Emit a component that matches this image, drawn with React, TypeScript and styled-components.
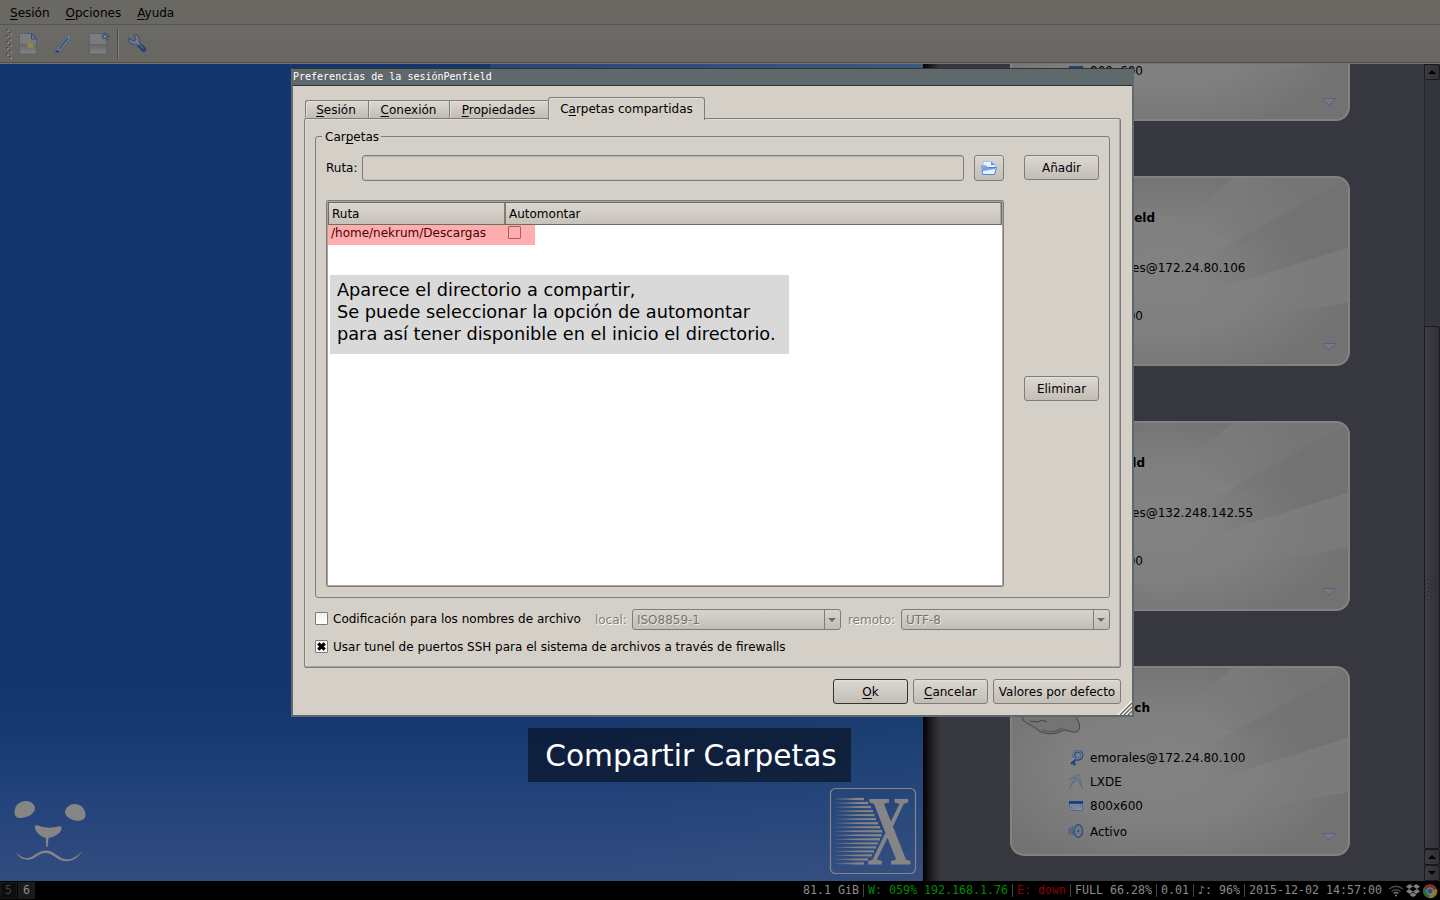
import React from "react";
import styled, { createGlobalStyle, css } from "styled-components";

const GlobalStyle = createGlobalStyle`
  * { box-sizing: border-box; }
  body { margin: 0; background: #000; }
`;

const Screen = styled.div`
  position: relative;
  display: flex;
  flex-direction: column;
  width: 1440px;
  height: 900px;
  overflow: hidden;
  font: 12px/16px "DejaVu Sans", sans-serif;
  color: #000;
  white-space: nowrap;
`;

/* ---------- main window ---------- */

const MenuBar = styled.div`
  display: flex;
  flex: none;
  gap: 16px;
  height: 25px;
  padding: 5px 10px 0;
  background: #6a6863;
  border-bottom: 1px solid #55534f;
`;

const Mnemonic = styled.span`
  text-decoration: underline;
  text-decoration-thickness: 1px;
  text-underline-offset: 2px;
  text-decoration-skip-ink: none;
`;

const ToolBar = styled.div`
  display: flex;
  flex: none;
  align-items: center;
  height: 39px;
  padding-left: 6px;
  background: linear-gradient(#6c6a66, #686661);
  border-bottom: 1px solid #75736f;
  box-shadow: inset 0 -1px 0 #514f4b;
`;

const ToolIcon = styled.svg<{ $gap: number }>`
  flex: none;
  width: 22px;
  height: 24px;
  margin-left: ${(p) => p.$gap}px;
`;

const ToolSeparator = styled.div`
  width: 2px;
  height: 30px;
  margin-left: 7px;
  background: #4b4945;
  border-right: 1px solid #84827d;
`;

const Workspace = styled.div`
  display: flex;
  flex: none;
  height: 817px;
`;

const Wallpaper = styled.div`
  display: flex;
  align-items: flex-end;
  justify-content: space-between;
  width: 923px;
  height: 817px;
  padding: 0 6px 6px 12px;
  background: linear-gradient(90deg, #28447a, #3a5a80) right top / 433px 20px no-repeat,
    linear-gradient(75deg, rgba(90, 130, 140, 0) 55%, rgba(90, 120, 130, 0.12) 100%),
    linear-gradient(#13366c 0, #13366c 76%, #173a70 82%, #23437a 90%, #334c80 100%);
`;

const SessionPanel = styled.div`
  display: flex;
  flex-direction: column;
  gap: 55px;
  width: 501px;
  height: 817px;
  padding-left: 87px;
  overflow: hidden;
  background: linear-gradient(90deg, #000 0, #1a1a1d 7px, #373740 17px);
`;

const Card = styled.div`
  position: relative;
  flex: none;
  display: flex;
  flex-direction: column;
  width: 340px;
  height: 190px;
  border: 2px solid #828282;
  border-radius: 14px;
  overflow: hidden;
  background: radial-gradient(ellipse 190px 110px at 150px 100px, #828282 0, #808080 50%, #727272 100%);
  &:first-child { margin-top: -133px; }
`;

const Sheen = styled.svg`
  position: absolute;
  inset: 0;
  width: 336px;
  height: 186px;
`;

const CardHead = styled.div`
  position: relative;
  display: flex;
  height: 78px;
  padding: 8px 0 0 8px;
`;

const CardName = styled.div<{ $end: number }>`
  width: ${(p) => p.$end - 1084}px;
  padding-top: 24px;
  direction: rtl;
  font-weight: bold;
`;

const CardRow = styled.div<{ $last?: boolean }>`
  position: relative;
  display: flex;
  align-items: center;
  gap: 6px;
  height: 24px;
  padding: 0 11px 0 56px;
  margin-top: ${(p) => (p.$last ? 2 : 0)}px;
  svg { flex: none; }
`;

const Expander = styled.svg`
  width: 16px;
  height: 10px;
  margin: 10px 0 0 auto;
`;

const ScrollBar = styled.div`
  display: flex;
  flex-direction: column;
  width: 16px;
  background: #34343b;
  border-left: 1px dotted #1e1e22;
`;

const ScrollButton = styled.div`
  display: flex;
  align-items: center;
  justify-content: center;
  flex: none;
  height: 16px;
  margin-left: -1px;
  border: 1px solid #1a1a1d;
  border-radius: 2px;
  background: linear-gradient(90deg, #3b3b44, #2f2f35);
`;

const ScrollHandle = styled.div`
  display: flex;
  align-items: center;
  justify-content: center;
  height: 523px;
  margin: 246px 0 0 -1px;
  border: 1px solid #1a1a1d;
  border-radius: 2px;
  background: linear-gradient(90deg, #3c3c46, #303036);
`;

/* ---------- status bar ---------- */

const StatusBar = styled.div`
  display: flex;
  flex: none;
  align-items: center;
  height: 19px;
  background: #000;
  color: #8b8b8b;
  font: 11.63px/16px "DejaVu Sans Mono", monospace;
`;

const Desk = styled.div<{ $active?: boolean }>`
  width: 17px;
  height: 17px;
  margin-right: 1px;
  line-height: 15px;
  text-align: center;
  border: 1px solid ${(p) => (p.$active ? "#1d1d1d" : "#191919")};
  background: ${(p) => (p.$active ? "#1a1a1a" : "#0e0e0e")};
  color: ${(p) => (p.$active ? "#8b8b8b" : "#444")};
`;

const StatusItems = styled.div`
  display: flex;
  align-items: center;
  margin-left: auto;
`;

const StatusItem = styled.div<{ $chars: number; $color?: string; $last?: boolean }>`
  width: ${(p) => p.$chars * 7 + (p.$last ? 6 : 5)}px;
  margin-right: ${(p) => (p.$last ? 0 : 4)}px;
  height: 13px;
  line-height: 13px;
  color: ${(p) => p.$color || "#8b8b8b"};
  border-right: ${(p) => (p.$last ? "none" : "1px solid #444")};
`;

const Tray = styled.div`
  display: flex;
  gap: 1px;
  width: 52px;
  padding-right: 2px;
`;

/* ---------- dialog ---------- */

const Dialog = styled.div`
  position: absolute;
  left: 291px;
  top: 68px;
  display: flex;
  flex-direction: column;
  width: 843px;
  height: 649px;
  border: 2px solid #5f686b;
  border-top: 1px solid #333;
  background: #d4cfc7;
`;

const TitleBar = styled.div`
  flex: none;
  height: 17px;
  background: #5f686b;
  border-bottom: 1px solid #2c2f30;
  color: #fff;
  font: 10px/16px "DejaVu Sans Mono", monospace;
`;

const Tabs = styled.div`
  position: relative;
  display: flex;
  align-items: flex-end;
  flex: none;
  height: 33px;
  margin: 0 0 -1px 12px;
`;

const Tab = styled.div<{ $w: number; $active?: boolean }>`
  width: ${(p) => p.$w}px;
  height: 19px;
  padding-right: 1px;
  text-align: center;
  line-height: 19px;
  border: 1px solid #807d78;
  border-right-width: 0;
  background: linear-gradient(#dcd8d1, #c1bcb4);
  box-shadow: inset 1px 1px 0 #e2dfd9;
  &:first-child {
    border-top-left-radius: 3px;
    padding-right: 2px;
  }
  ${(p) =>
    p.$active &&
    css`
      height: 23px;
      line-height: 22px;
      border-right-width: 1px;
      border-bottom: 0;
      border-radius: 3px 3px 0 0;
      background: #d4cfc7;
      margin-bottom: -1px;
      padding: 0 0 1px;
    `}
`;

const Pane = styled.div`
  display: flex;
  flex-direction: column;
  flex: none;
  width: 817px;
  height: 550px;
  margin-left: 11px;
  padding: 9px 10px 0;
  border: 1px solid #807d78;
  border-radius: 2px;
  box-shadow: inset -1px -1px 0 #aaa69f, inset 1px 1px 0 #dedbd5;
`;

const Group = styled.fieldset`
  display: flex;
  flex: none;
  width: 795px;
  height: 470px;
  margin: 0;
  padding: 10px 10px 10px;
  border: 1px solid #807d78;
  border-radius: 3px;
  min-width: 0;
`;

const Legend = styled.legend`
  margin-left: -4px;
  padding: 0 2px 0 3px;
  height: 17px;
  line-height: 19px;
`;

const Main = styled.div`
  width: 678px;
  margin-right: 20px;
`;

const PathRow = styled.div`
  display: flex;
  align-items: center;
  height: 26px;
`;

const PathInput = styled.div`
  width: 602px;
  height: 26px;
  margin: 0 10px 0 auto;
  border: 1px solid #807d78;
  border-radius: 3px;
  box-shadow: inset 0 1px 0 #bab6af, inset 0 -1px 0 #c4c0b9;
`;

const Button = styled.div<{ $w: number; $h?: number; $primary?: boolean }>`
  display: flex;
  flex: none;
  align-items: center;
  justify-content: center;
  width: ${(p) => p.$w}px;
  height: ${(p) => p.$h || 25}px;
  border: 1px solid ${(p) => (p.$primary ? "#35332f" : "#807d78")};
  border-radius: 3px;
  background: linear-gradient(#dcd8d1, #c2bdb5);
  box-shadow: inset 0 1px 0 #e3e0da;
`;

const Side = styled.div`
  display: flex;
  flex-direction: column;
  gap: 196px;
`;

const Table = styled.div`
  position: relative;
  height: 387px;
  margin-top: 19px;
  padding: 1px;
  border: 1px solid #807d78;
  border-radius: 2px;
  background: #fff;
  box-shadow: inset 0 0 0 1px #aaa69f;
`;

const TableHead = styled.div`
  display: flex;
  height: 23px;
  border: 1px solid #6f6c67;
  background: linear-gradient(#dcd8d1, #c6c1b9);
`;

const HeadCell = styled.div<{ $w?: number }>`
  width: ${(p) => (p.$w ? p.$w + "px" : "auto")};
  flex: ${(p) => (p.$w ? "none" : "1")};
  padding: 3px 0 0 3px;
  border-right: ${(p) => (p.$w ? "2px solid #807d78" : "1px solid #aaa69f")};
`;

const SelectedRow = styled.div`
  display: flex;
  width: 207px;
  height: 20px;
  padding: 0 0 0 3px;
  background: #ffadad;
  color: #4a0008;
`;

const RowCheck = styled.div`
  width: 13px;
  height: 13px;
  margin: 1px 14px 0 auto;
  border: 1px solid #a05f60;
  border-radius: 1px;
`;

const Note = styled.div`
  position: absolute;
  left: 3px;
  top: 74px;
  width: 459px;
  height: 79px;
  padding: 4px 7px;
  background: #d9d9d9;
  font-size: 17.73px;
  line-height: 22px;
`;

const OptionRow = styled.div<{ $top: number }>`
  display: flex;
  align-items: center;
  flex: none;
  height: 21px;
  margin-top: ${(p) => p.$top}px;
`;

const CheckBox = styled.div`
  display: flex;
  width: 13px;
  height: 13px;
  margin: -2px 5px 0 0;
  border: 1px solid #807d78;
  border-radius: 1px;
  background: linear-gradient(#f1f1f1, #fff);
`;

const OptionLabel = styled.div`
  margin-top: -2px;
`;

const Dim = styled.div<{ $gap: number; $w: number }>`
  width: ${(p) => p.$w}px;
  margin-left: ${(p) => p.$gap}px;
  color: #807d78;
  text-shadow: 1px 1px 0 #fff;
`;

const Combo = styled.div`
  display: flex;
  width: 209px;
  height: 21px;
  padding-left: 4px;
  line-height: 20px;
  border: 1px solid #807d78;
  border-radius: 3px;
  color: #76736e;
  text-shadow: 1px 1px 0 #e9e7e2;
  background: linear-gradient(#d8d4cd, #c2bdb5);
`;

const ComboArrow = styled.div`
  display: flex;
  align-items: center;
  justify-content: center;
  width: 16px;
  height: 19px;
  margin-left: auto;
  border-left: 1px solid #807d78;
`;

const Footer = styled.div`
  display: flex;
  gap: 5px;
  justify-content: flex-end;
  padding: 11px 11px 0 0;
`;

const Grip = styled.svg`
  position: absolute;
  right: 0;
  bottom: 0;
  width: 14px;
  height: 14px;
`;

const Caption = styled.div`
  position: absolute;
  left: 528px;
  top: 728px;
  width: 323px;
  height: 54px;
  padding-left: 3px;
  text-align: center;
  background: rgba(10, 20, 38, 0.7);
  color: #fff;
  font-size: 29.63px;
  line-height: 55px;
`;

const FaceArt = styled.svg`
  width: 76px;
  height: 66px;
  margin-bottom: 11px;
`;

const LogoArt = styled.svg`
  width: 87px;
  height: 87px;
  overflow: visible;
`;

function Face() {
  return (
    <FaceArt viewBox="12 798 76 66" fill="#858585">
      <path d="M14.500 812C14.500 806 19 801 25.500 801C31 801 35 804.500 35 809C34 814 27 818 20.500 818C16.500 818 14.500 816 14.500 812Z" />
      <path d="M65 812C65.500 807 70 804 75 804C81 804 86 809 85.500 816C85 820 80 821.500 75 820.500C70 819.500 65 816 65 812Z" />
      <path d="M35 826C36 824.500 38 825.500 41 826.500C46 828 53 828 58 826.500C60 826 62 826.500 61.500 829C60 834 54 837 48.500 838L47.700 847H46.300L45.800 838C40 836.500 34 831 35 826Z" />
      <path d="M16 852C21 858 27 859.500 32 856.500C37 853.500 41 850 47 850.500C54 851 58 857.500 64 859C71 860.500 77 857 82 851C78 859 71 862 64 861C57 860 53 853.500 46 853C40 852.500 37 857 32 859C26 861 19 859 16 852Z" />
    </FaceArt>
  );
}

function XLogo() {
  const ends = [864, 868, 871, 873, 874.5, 876, 878, 880, 882, 881.5, 880, 878, 876, 874, 872, 868, 864];
  return (
    <LogoArt viewBox="830 788 87 87">
      <defs>
        <linearGradient id="fade" gradientUnits="userSpaceOnUse" x1="835" x2="856" y1="0" y2="0">
          <stop offset="0" stopColor="#858585" stopOpacity="0.3" />
          <stop offset="1" stopColor="#858585" />
        </linearGradient>
      </defs>
      <rect x="830.500" y="788.500" width="85" height="85" rx="5" fill="none" stroke="#858585" strokeWidth="1.200" />
      {ends.map((e, i) => {
        const y = 799 + i * 4.03;
        return <path key={i} d={`M836 ${y - 0.4}L${e} ${y - 1.2}v2.400L836 ${y + 0.4}z`} fill="url(#fade)" />;
      })}
      <text transform="translate(867 864) scale(.62 1)" fontFamily="Liberation Serif, serif" fontWeight="bold" fontSize="99" fill="#858585">X</text>
    </LogoArt>
  );
}

const Triangle = ({ up, color = "#000" }: { up?: boolean; color?: string }) => (
  <svg width="8" height="4" viewBox="0 0 8 4">
    <path d={up ? "M0 4L4 0L8 4Z" : "M0 0H8L4 4Z"} fill={color} />
  </svg>
);

const KeyIcon = () => (
  <svg width="16" height="16" viewBox="0 0 16 16" fill="none">
    <path d="M8.500 8.500L2.500 13.500M4.500 11.500L7 15" stroke="#23457b" strokeWidth="3" />
    <circle cx="10" cy="5.300" r="4" stroke="#2d4e82" strokeWidth="3" />
    <circle cx="9.600" cy="4.900" r="4" stroke="#7889a3" strokeWidth="1.100" />
    <path d="M7 8L1 13" stroke="#8090a8" strokeWidth="1.300" />
  </svg>
);

const LxdeIcon = () => (
  <svg width="16" height="16" viewBox="0 0 16 16" fill="none" stroke="#5b6c87" strokeWidth="0.900">
    <path d="M.5 5.500L5 3.500L11.500 .5L12 5L14.500 15L10 5.500L6 8L1.500 15L4.500 7.500L9 3.500L.5 5.500Z" fill="#767c86" />
  </svg>
);

const ScreenIcon = () => (
  <svg width="16" height="16" viewBox="0 0 16 16">
    <rect x="1.500" y="3.500" width="13" height="9" rx="1" fill="#7f8da2" stroke="#506a92" />
    <path d="M1 3h14v3H1z" fill="#1f4279" />
    <path d="M3 7.500h10v2H7v1H3z" fill="#5c7091" />
    <path d="M4 9h5M10 8.500h2" stroke="#939ba6" />
  </svg>
);

const SoundIcon = () => (
  <svg width="16" height="16" viewBox="0 0 16 16" fill="none" stroke="#2c4e80">
    <ellipse cx="10.300" cy="7" rx="4.200" ry="6.300" strokeWidth="1.400" />
    <ellipse cx="10.300" cy="7" rx="2.300" ry="4" stroke="#627692" strokeWidth=".8" />
    <path d="M1.500 4v6.500M4.200 2.500v9" strokeWidth="1.700" stroke="#42608a" />
    <path d="M8.800 7h3M10.300 5.500v3" strokeWidth="1" />
  </svg>
);

function Seal() {
  return (
    <svg width="64" height="64" viewBox="0 0 64 64" fill="#747474" stroke="#424242" strokeWidth="1">
      <path d="M2 38C2 25 20 14 36 17C52 19 56 34 57 43C61 48 60 56 56 56C51 57 48 54 44 54C36 59 24 59 18 54C12 49 7 48 3 44Z" />
      <path d="M10 45L18 46L22 44L27 46" fill="none" />
      <path d="M22 54C30 57 38 55 43 52" fill="none" stroke="#5d5d5d" strokeWidth="1.500" />
    </svg>
  );
}

interface Session {
  id: number;
  name?: string;
  end?: number;
  user?: string;
}

function SessionCard({ name, end = 1150, user }: Session) {
  return (
    <Card>
      <Sheen viewBox="2 2 336 186">
        <defs>
          <linearGradient id="wedge" gradientUnits="userSpaceOnUse" x1="190" x2="300" y1="85" y2="50">
            <stop offset="0" stopColor="#727272" stopOpacity="0" />
            <stop offset="1" stopColor="#727272" />
          </linearGradient>
          <linearGradient id="beam" gradientUnits="userSpaceOnUse" x1="190" x2="290" y1="60" y2="20">
            <stop offset="0" stopColor="#7e7e7e" stopOpacity="0" />
            <stop offset="0.400" stopColor="#7b7b7b" />
            <stop offset="1" stopColor="#757575" />
          </linearGradient>
          <linearGradient id="band" gradientUnits="userSpaceOnUse" x1="240" x2="338" y1="120" y2="100">
            <stop offset="0" stopColor="#808080" stopOpacity="0" />
            <stop offset="1" stopColor="#7b7b7b" />
          </linearGradient>
        </defs>
        <path d="M223 2L170 46L235 70L340 2Z" fill="url(#beam)" />
        <path d="M340 2L190 84L210 112L340 71Z" fill="url(#wedge)" />
        <path d="M340 71L210 112L200 150L340 126Z" fill="url(#band)" />
      </Sheen>
      <CardHead>
        <Seal />
        {name && <CardName $end={end}>{name}</CardName>}
      </CardHead>
      <CardRow>{user && <><KeyIcon />{user}</>}</CardRow>
      <CardRow>{user && <><LxdeIcon />LXDE</>}</CardRow>
      <CardRow><ScreenIcon />800x600</CardRow>
      <CardRow $last>
        <SoundIcon />Activo
        <Expander viewBox="0 0 16 10"><path d="M1.500 1.500H14.500L8 8Z" fill="#787a7e" stroke="#4c6288" strokeWidth=".9" /></Expander>
      </CardRow>
    </Card>
  );
}

const sessions: Session[] = [
  { id: 1 },
  { id: 2, name: "Penfield", end: 1155, user: "emorales@172.24.80.106" },
  { id: 3, name: "Penfield", end: 1145, user: "emorales@132.248.142.55" },
  { id: 4, name: "Zentech", end: 1150, user: "emorales@172.24.80.100" },
];

const status = [
  { text: "81.1 GiB" },
  { text: "W: 059% 192.168.1.76", color: "#008c00" },
  { text: "E: down", color: "#8c0000" },
  { text: "FULL 66.28%" },
  { text: "0.01" },
  { text: "♪: 96%" },
  { text: "2015-12-02 14:57:00" },
];

export default function App() {
  return (
    <>
      <GlobalStyle />
      <Screen>
        <MenuBar>
          <div><Mnemonic>S</Mnemonic>esión</div>
          <div><Mnemonic>O</Mnemonic>pciones</div>
          <div><Mnemonic>A</Mnemonic>yuda</div>
        </MenuBar>
        <ToolBar>
          <svg width="7" height="30" viewBox="0 0 7 30">
            {[0, 1, 2, 3, 4, 5, 6, 7, 8, 9].map((i) => (
              <g key={i}>
                <rect x={i % 2 ? 3 : 0} y={i * 3} width="2" height="2" fill="#4a4844" />
                <rect x={i % 2 ? 4 : 1} y={i * 3 + 1} width="2" height="2" fill="#85837e" />
              </g>
            ))}
          </svg>
          <ToolIcon $gap={5} viewBox="0 0 22 24">
            <defs>
              <linearGradient id="paper" x1="0" x2="0" y1="0" y2="1">
                <stop offset="0" stopColor="#7d7d7c" />
                <stop offset="0.490" stopColor="#7b7b7a" />
                <stop offset="0.520" stopColor="#666" />
                <stop offset="0.950" stopColor="#828282" />
              </linearGradient>
            </defs>
            <path d="M1.500 1.500H13.500L18.500 7V22H1.500Z" fill="url(#paper)" stroke="#55637a" />
            <path d="M13.500 1.500V7H18.500Z" fill="#717c8d" stroke="#2f4b7c" />
            <path d="M12.500 8.500L14 11.500L17 12L15 14L15.500 17L12.500 15.500L9.500 17L10 14L8 12L11 11.500Z" fill="#8c8850" stroke="#79774f" strokeWidth=".5" />
          </ToolIcon>
          <ToolIcon $gap={12} viewBox="0 0 22 24">
            <path d="M4 17L16 3L18.500 3.500V7L8.500 19.500L3.500 21Z" fill="#777c82" stroke="#4e6080" />
            <path d="M7 17L16 6" stroke="#34507c" strokeWidth="1.600" />
            <path d="M3.500 21L4.500 17.500L8 19.500Z" fill="#294570" />
          </ToolIcon>
          <ToolIcon $gap={14} viewBox="0 0 22 24">
            <path d="M1.500 1.500H14L18.500 7V22H1.500Z" fill="url(#paper)" stroke="#55637a" />
            <path d="M14 1.500L18.500 7M14 7L20 1.500M17 .5V3M22 4.500H18M21 8L17 5M13 4L17 5" stroke="#304d7d" fill="none" />
            <circle cx="17" cy="4.500" r="2" fill="#7d8794" stroke="#304d7d" />
          </ToolIcon>
          <ToolSeparator />
          <ToolIcon $gap={8} viewBox="0 0 22 24">
            <path d="M7 2.500L9 7.500L6.500 9L1.500 6.500C.8 10.500 5 13.500 9 12L15 19C17.500 20.500 20 18.500 18.500 16L12 10C13.500 6 11 2.500 7 2.500Z" fill="#787d84" stroke="#3c5377" strokeWidth="1.200" />
            <path d="M13 14L17 17.500" stroke="#243f6d" strokeWidth="4" strokeLinecap="round" />
            <path d="M12 12.500L16.500 16.500" stroke="#7b8796" />
          </ToolIcon>
        </ToolBar>

        <Workspace>
          <Wallpaper>
            <Face />
            <XLogo />
          </Wallpaper>
          <SessionPanel>
            {sessions.map((s) => <SessionCard key={s.id} {...s} />)}
          </SessionPanel>
          <ScrollBar>
            <ScrollButton><Triangle up /></ScrollButton>
            <ScrollHandle>
              <svg width="8" height="18" viewBox="0 0 8 18" fill="#222226">
                {[0, 4, 8, 12, 16].map((y) => <path key={y} d={`M0 ${y}h1v1h-1zM3 ${y + 1}h1v1h-1zM6 ${y}h1v1h-1z`} />)}
              </svg>
            </ScrollHandle>
            <ScrollButton><Triangle up /></ScrollButton>
            <ScrollButton><Triangle /></ScrollButton>
          </ScrollBar>
        </Workspace>

        <StatusBar>
          <Desk>5</Desk>
          <Desk $active>6</Desk>
          <StatusItems>
            {status.map((s, i) => (
              <StatusItem key={s.text} $chars={s.text.length} $color={s.color} $last={i === status.length - 1}>{s.text}</StatusItem>
            ))}
            <Tray>
              <svg width="16" height="16" viewBox="0 0 16 16" fill="none" stroke="#4a4a4a" strokeWidth="1.500">
                <path d="M1 6Q8 .5 15 6M3.500 8.500Q8 5 12.500 8.500" />
                <path d="M5.500 10.500Q8 8.500 10.500 10.500" stroke="#777" />
                <circle cx="8" cy="12.500" r="1" fill="#888" stroke="none" />
              </svg>
              <svg width="16" height="16" viewBox="0 0 16 16" fill="#808080">
                <path d="M5 1L8 3.500L4 6L1 3.500ZM11 1L15 3.500L12 6L8 3.500ZM4 6L8 8.500L5 11L1 8.500ZM12 6L15 8.500L11 11L8 8.500ZM8 9.500L11.500 12L8 14L4.500 12Z" />
              </svg>
              <svg width="16" height="16" viewBox="0 0 16 16">
                <circle cx="8" cy="8" r="7" fill="#7d302a" />
                <path d="M8 8L2 4.500A7 7 0 0 0 7 15Z" fill="#2d6b3c" />
                <path d="M8 8L15 6A7 7 0 0 1 7 15Z" fill="#8a7a25" />
                <circle cx="8" cy="8" r="3.500" fill="#888" />
                <circle cx="8" cy="8" r="2.600" fill="#25528c" />
              </svg>
            </Tray>
          </StatusItems>
        </StatusBar>

        <Dialog>
          <TitleBar>Preferencias de la sesiónPenfield</TitleBar>
          <Tabs>
            <Tab $w={63}><Mnemonic>S</Mnemonic>esión</Tab>
            <Tab $w={81}><Mnemonic>C</Mnemonic>onexión</Tab>
            <Tab $w={99}><Mnemonic>P</Mnemonic>ropiedades</Tab>
            <Tab $w={157} $active>C<Mnemonic>a</Mnemonic>rpetas compartidas</Tab>
          </Tabs>
          <Pane>
            <Group>
              <Legend>Car<Mnemonic>p</Mnemonic>etas</Legend>
              <Main>
                <PathRow>
                  Ruta:
                  <PathInput />
                  <Button $w={30} $h={26}>
                    <svg width="16" height="16" viewBox="0 0 16 16">
                      <path d="M2 1.500H10L14 5V10H2Z" fill="#eef4fd" stroke="#a5c2ef" />
                      <path d="M10 1.500V5H14Z" fill="#5c92e6" />
                      <path d="M.8 6H5L6.500 7.500H15.500L13.500 14.500H1.500Z" fill="#e9f1fc" stroke="#4c86df" />
                      <path d="M1.500 6.500H5L6.500 8H14.500L14.200 9L2 11Z" fill="#70a2ec" />
                    </svg>
                  </Button>
                </PathRow>
                <Table>
                  <TableHead>
                    <HeadCell $w={177}>Ruta</HeadCell>
                    <HeadCell>Automontar</HeadCell>
                  </TableHead>
                  <SelectedRow>/home/nekrum/Descargas<RowCheck /></SelectedRow>
                  <Note>
                    Aparece el directorio a compartir,<br />
                    Se puede seleccionar la opción de automontar<br />
                    para así tener disponible en el inicio el directorio.
                  </Note>
                </Table>
              </Main>
              <Side>
                <Button $w={75}>Añadir</Button>
                <Button $w={75}>Eliminar</Button>
              </Side>
            </Group>
            <OptionRow $top={11}>
              <CheckBox />
              <OptionLabel>Codificación para los nombres de archivo</OptionLabel>
              <Dim $gap={14} $w={37}>local:</Dim>
              <Combo>ISO8859-1<ComboArrow><Triangle color="#6f6c67" /></ComboArrow></Combo>
              <Dim $gap={7} $w={53}>remoto:</Dim>
              <Combo>UTF-8<ComboArrow><Triangle color="#6f6c67" /></ComboArrow></Combo>
            </OptionRow>
            <OptionRow $top={7}>
              <CheckBox>
                <svg width="11" height="11" viewBox="0 0 11 11"><path d="M2.300 2.300L8.700 8.700M8.700 2.300L2.300 8.700" stroke="#000" strokeWidth="3.200" /></svg>
              </CheckBox>
              <OptionLabel>Usar tunel de puertos SSH para el sistema de archivos a través de firewalls</OptionLabel>
            </OptionRow>
          </Pane>
          <Footer>
            <Button $w={75} $primary><span><Mnemonic>O</Mnemonic>k</span></Button>
            <Button $w={75}><span><Mnemonic>C</Mnemonic>ancelar</span></Button>
            <Button $w={128}>Valores por defecto</Button>
          </Footer>
          <Grip viewBox="0 0 14 14" fill="none">
            <path d="M0 14L14 0M4 14L14 4M8 14L14 8" stroke="#fff" strokeWidth="1.200" />
            <path d="M2 14L14 2M6 14L14 6M10 14L14 10" stroke="#6b6965" strokeWidth="1.400" />
          </Grip>
        </Dialog>
        <Caption>Compartir Carpetas</Caption>
      </Screen>
    </>
  );
}
